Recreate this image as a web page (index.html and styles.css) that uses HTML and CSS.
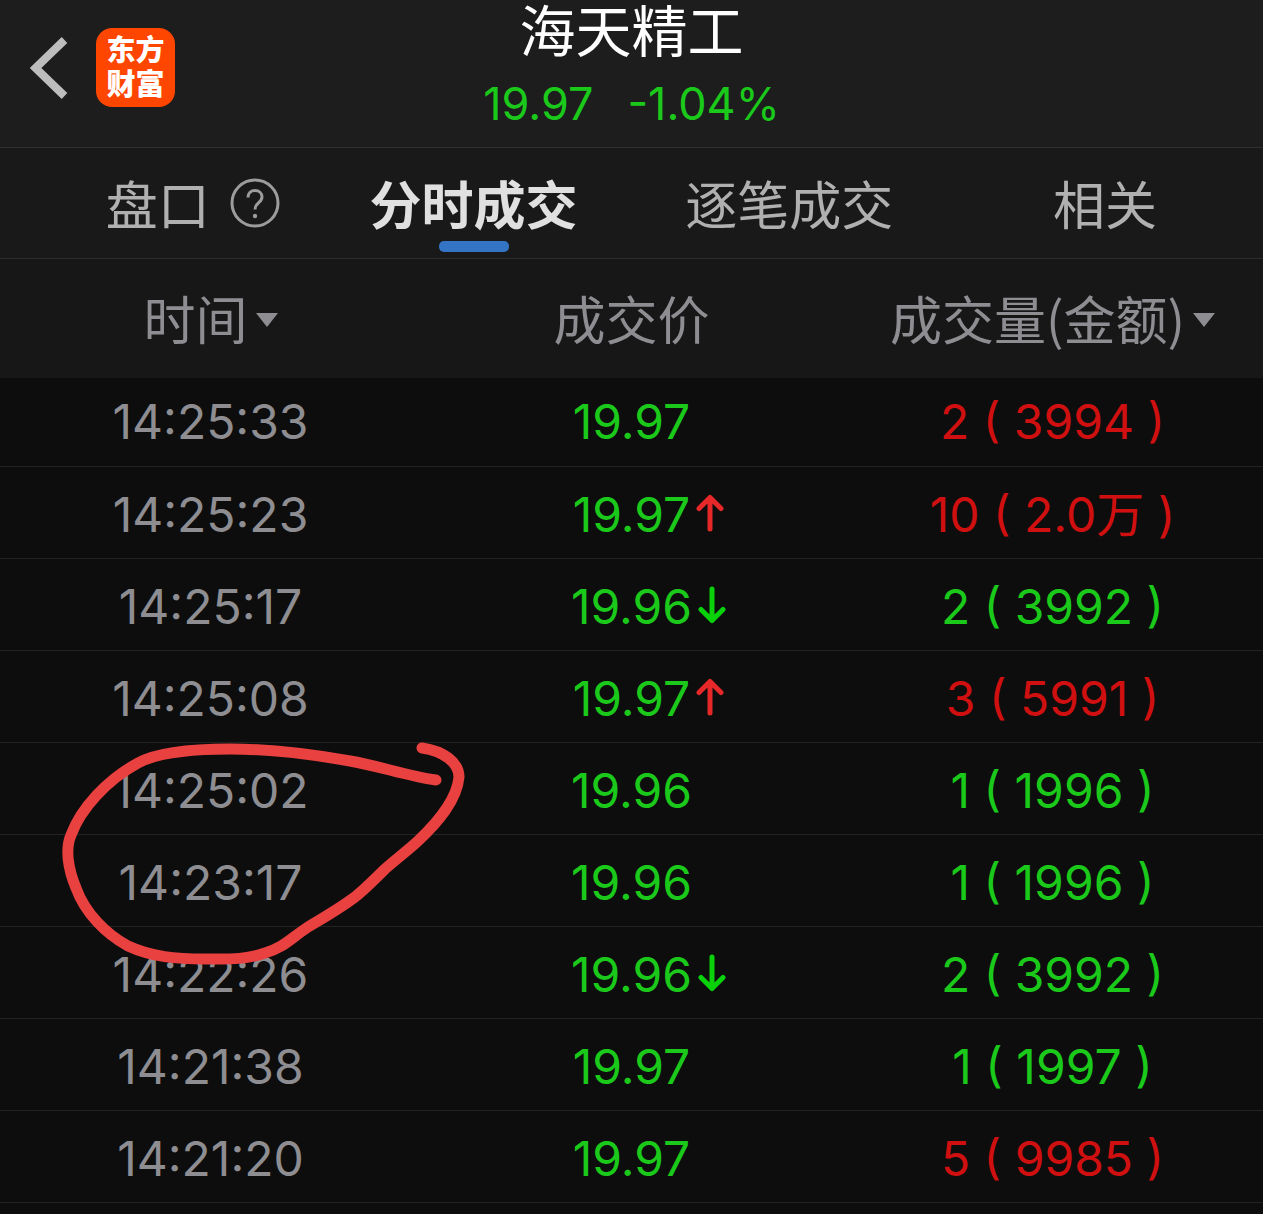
FILE: index.html
```html
<!DOCTYPE html>
<html lang="zh-CN">
  <head>
    <meta charset="UTF-8" />
    <meta name="viewport" content="width=device-width, initial-scale=1.0" />
    <title>海天精工 - 分时成交</title>

    <link rel="stylesheet" href="styles.css">
  </head>

  <body>
    <header class="header">
      <div class="header-left">
        <button type="button" class="back" aria-label="返回">
          <svg width="38" height="64" viewBox="0 0 38 64">
            <path d="M34.500 4 5.500 32 34.500 60" fill="none" stroke="#bdbdbd" stroke-width="8" />
          </svg>
        </button>
        <a class="logo" href="#"><span>东方</span><span>财富</span></a>
      </div>
      <div class="stock">
        <h1 class="stock-name">海天精工</h1>
        <div class="stock-price"><span>19.97</span><span>-1.04%</span></div>
      </div>
    </header>

    <nav class="tabs">
      <div class="tab-item">
        <button type="button" class="tab">盘口</button>
        <button type="button" class="help" aria-label="帮助">
          <svg width="50" height="50" viewBox="0 0 50 50" fill="none" stroke="#9c9c9c">
            <circle cx="25" cy="25" r="23" stroke-width="3" />
            <path d="M18 19.500c0-4.500 3-7 7-7s7 2.500 7 6.500c0 6-7 5.500-7 12.500" stroke-width="3" />
            <circle cx="25" cy="38" r="2.200" fill="#9c9c9c" stroke="none" />
          </svg>
        </button>
      </div>
      <div class="tab-item active"><button type="button" class="tab">分时成交</button></div>
      <div class="tab-item"><button type="button" class="tab">逐笔成交</button></div>
      <div class="tab-item"><button type="button" class="tab">相关</button></div>
    </nav>

    <main class="trades">
      <table class="trade-table">
        <thead>
          <tr>
            <th><button type="button" class="sort">时间</button></th>
            <th>成交价</th>
            <th><button type="button" class="sort">成交量(金额)</button></th>
          </tr>
        </thead>
        <tbody>
          <tr>
            <td>14:25:33</td>
            <td class="down"><div class="price">19.97</div></td>
            <td class="up">2 ( 3994 )</td>
          </tr>
          <tr>
            <td>14:25:23</td>
            <td class="down"><div class="price">19.97<svg class="arrow" viewBox="0 0 28 38"><use href="#arrow-up" /></svg></div></td>
            <td class="up">10 ( 2.0万 )</td>
          </tr>
          <tr>
            <td>14:25:17</td>
            <td class="down"><div class="price">19.96<svg class="arrow" viewBox="0 0 28 38"><use href="#arrow-down" /></svg></div></td>
            <td class="down">2 ( 3992 )</td>
          </tr>
          <tr>
            <td>14:25:08</td>
            <td class="down"><div class="price">19.97<svg class="arrow" viewBox="0 0 28 38"><use href="#arrow-up" /></svg></div></td>
            <td class="up">3 ( 5991 )</td>
          </tr>
          <tr>
            <td>14:25:02</td>
            <td class="down"><div class="price">19.96</div></td>
            <td class="down">1 ( 1996 )</td>
          </tr>
          <tr>
            <td>14:23:17</td>
            <td class="down"><div class="price">19.96</div></td>
            <td class="down">1 ( 1996 )</td>
          </tr>
          <tr>
            <td>14:22:26</td>
            <td class="down"><div class="price">19.96<svg class="arrow" viewBox="0 0 28 38"><use href="#arrow-down" /></svg></div></td>
            <td class="down">2 ( 3992 )</td>
          </tr>
          <tr>
            <td>14:21:38</td>
            <td class="down"><div class="price">19.97</div></td>
            <td class="down">1 ( 1997 )</td>
          </tr>
          <tr>
            <td>14:21:20</td>
            <td class="down"><div class="price">19.97</div></td>
            <td class="up">5 ( 9985 )</td>
          </tr>
        </tbody>
      </table>

      <!-- hand drawn mark over the 14:25:02 and 14:23:17 rows -->
      <svg class="mark" width="440" height="260" viewBox="0 0 440 260">
        <path d="M382 28C403 31 419 42 419 57C417 80 398 102 378 121C366 132 356 139 345 149C334 160 325 169 315 177C299 189 283 198 268 207C250 219 243 228 225 233C205 240 188 239 165 239C136 239 112 237 88 226C66 214 45 193 36 168C28 149 25 129 31 115C41 88 67 60 98 43C120 31 160 29 190 29C230 29 270 34 310 41C340 46 366 56 396 60" />
      </svg>
    </main>

    <svg class="symbols" aria-hidden="true">
      <symbol id="arrow-up" viewBox="0 0 28 38">
        <path d="M14 35V4M3 14.500 14 3.500 25 14.500" fill="none" stroke="#e62828" stroke-width="5" stroke-linecap="round" stroke-linejoin="round" />
      </symbol>
      <symbol id="arrow-down" viewBox="0 0 28 38">
        <path d="M14 3V34M3 23.500 14 34.500 25 23.500" fill="none" stroke="#0ad20a" stroke-width="5" stroke-linecap="round" stroke-linejoin="round" />
      </symbol>
    </svg>
  </body>
</html>
```
FILE: styles.css
```css
* {
  box-sizing: border-box;
}

body {
  margin: 0;
  background-color: #0d0d0d;
  color: #8e8d92;
  font-family: Inter, "Noto Sans CJK SC", sans-serif;
}

button {
  padding: 0;
  border: none;
  background: none;
  color: inherit;
  font: inherit;
  cursor: pointer;
}

svg {
  display: block;
}

.header {
  display: grid;
  grid-template-columns: 1fr auto 1fr;
  height: 148px;
  background-color: #1d1d1e;
  border-bottom: 1px solid #303031;
}

.header-left {
  display: flex;
  align-items: center;
  gap: 28px;
  padding: 0 0 12px 30px;
}

.logo {
  display: flex;
  flex-direction: column;
  align-items: center;
  justify-content: center;
  width: 79px;
  height: 79px;
  border-radius: 16px;
  background-color: #ff4600;
  color: #fff;
  font-family: Roboto, "Noto Sans CJK SC", sans-serif;
  font-size: 29px;
  font-weight: 900;
  line-height: 34px;
  text-decoration: none;
}

.stock {
  text-align: center;
}

.stock-name {
  margin: 0;
  color: #fff;
  font-family: Roboto, "Noto Sans CJK SC", sans-serif;
  font-size: 56px;
  font-weight: normal;
  line-height: 66px;
}

.stock-price {
  display: flex;
  justify-content: center;
  gap: 34px;
  color: #1bc91b;
  font-size: 45px;
  line-height: 76px;
}

.tabs {
  display: grid;
  grid-template-columns: repeat(4, 1fr);
  height: 111px;
  background-color: #19191a;
  border-bottom: 1px solid #2c2c2d;
  color: #b0b0b0;
  font-family: "Noto Sans CJK SC", sans-serif;
  font-size: 52px;
}

.tab-item {
  position: relative;
  display: grid;
  grid-template-columns: 1fr auto 1fr;
  align-items: center;
}

.tab {
  grid-column: 2;
  line-height: 110px;
}

.help {
  justify-self: start;
  margin-left: 20px;
}

.active .tab {
  color: #e0e0e0;
  font-weight: bold;
}

.active::after {
  content: "";
  position: absolute;
  bottom: 6px;
  left: calc(50% - 35px);
  width: 70px;
  height: 11px;
  border-radius: 5px;
  background-color: #3375c4;
}

.trades {
  position: relative;
}

.trade-table {
  width: 100%;
  table-layout: fixed;
  border-spacing: 0;
  text-align: center;
}

.trade-table th {
  height: 119px;
  padding: 0 0 2px;
  background-color: #171717;
  font-family: "Noto Sans CJK SC", sans-serif;
  font-size: 52px;
  font-weight: normal;
}

.trade-table td {
  height: 92px;
  padding: 4px 0 0;
  border-bottom: 1px solid #232324;
  font-size: 48px;
  line-height: 60px;
}

.trade-table tbody tr:first-child td {
  height: 89px;
  padding-top: 0;
}

.sort {
  display: inline-flex;
  align-items: center;
  gap: 8px;
}

.sort::after {
  content: "";
  margin-top: 4px;
  border: 11px solid transparent;
  border-top: 14px solid #8e8d92;
  border-bottom: 0;
}

.trade-table .up {
  color: #d01010;
}

.trade-table .down {
  color: #1bc91b;
}

.price {
  display: grid;
  grid-template-columns: 1fr auto 1fr;
  align-items: center;
}

.price::before {
  content: "";
}

.arrow {
  width: 28px;
  height: 38px;
  margin: 0 0 4px 6px;
}

.mark {
  position: absolute;
  top: 461px;
  left: 40px;
  fill: none;
  stroke: #e94040;
  stroke-width: 11px;
  stroke-linecap: round;
  stroke-linejoin: round;
}

.symbols {
  width: 0;
  height: 0;
}
```
